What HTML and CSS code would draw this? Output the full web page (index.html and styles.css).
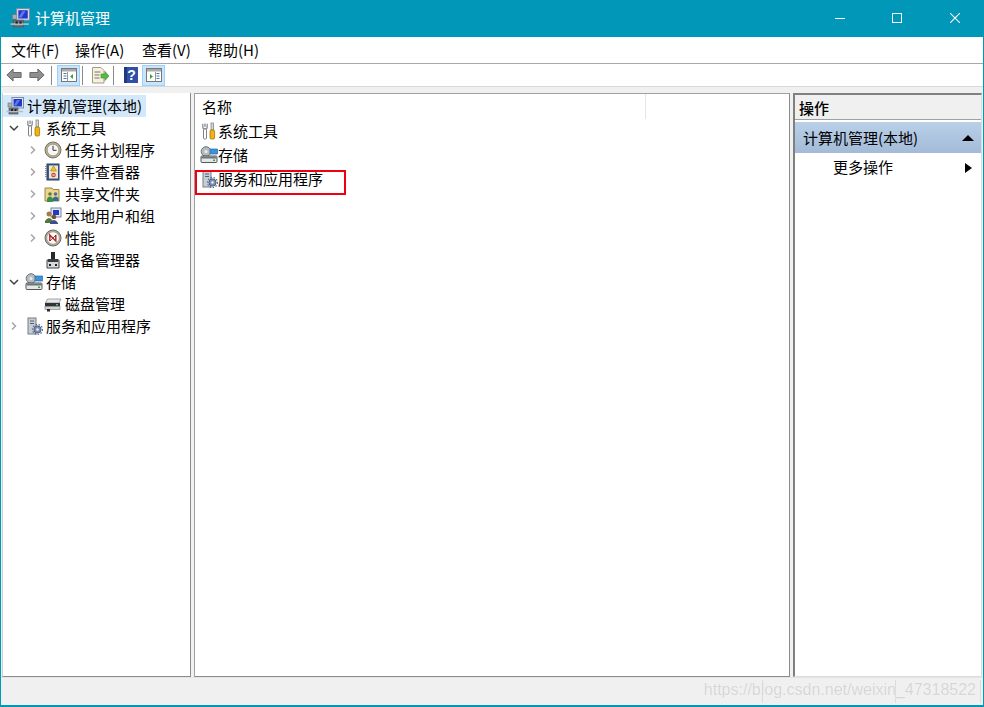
FILE: index.html
```html
<!DOCTYPE html>
<html lang="zh">
<head>
<meta charset="utf-8">
<title>计算机管理</title>
<link rel="stylesheet" href="styles.css">
</head>
<body>
<svg class="defs" width="0" height="0" aria-hidden="true">
  <defs>
    <symbol id="mgmt" viewBox="0 0 18 18">
      <rect x="2" y="6" width="7" height="4" fill="#a9aeb2" stroke="#6d7377" stroke-width=".6"/>
      <rect x="6" y="0.500" width="11.500" height="10.500" fill="#dfe6f2" stroke="#7f8ca5"/>
      <rect x="7.500" y="2" width="8.500" height="7.500" fill="#2338c8"/>
      <path d="M8 8l3-5h3l-4 6Z" fill="#5d79e8"/>
      <rect x="3" y="11" width="9" height="6" fill="#6f7a80" stroke="#4c5256" stroke-width=".7"/>
      <path d="M.5 14.500h16.500" stroke="#b9bec2" stroke-width="1.400"/>
      <rect x="5" y="12" width="2" height="2" fill="#222"/>
      <rect x="8.500" y="12" width="2" height="2" fill="#222"/>
    </symbol>
    <symbol id="tools" viewBox="0 0 18 18">
      <path d="M5 1.500v3.500M2.800 1.800v3.200q0 2 2.200 2t2.200-2V1.800" fill="none" stroke="#8a8f94" stroke-width="1.300"/>
      <rect x="3.500" y="7" width="3" height="10" rx="1" fill="#fff" stroke="#7d8186"/>
      <rect x="11" y="1" width="2.600" height="7" fill="#d6d9dc" stroke="#777" stroke-width=".7"/>
      <rect x="10" y="8" width="4.600" height="9" rx="1.300" fill="#f0b312" stroke="#946a00" stroke-width=".7"/>
    </symbol>
    <symbol id="clock" viewBox="0 0 18 18">
      <circle cx="9" cy="9" r="8" fill="#b7ad8a" stroke="#77746a"/>
      <circle cx="9" cy="9" r="5.800" fill="#f4f6f8" stroke="#94927f" stroke-width=".7"/>
      <path d="M9 4.800V9.300H12.500" fill="none" stroke="#333" stroke-width="1"/>
    </symbol>
    <symbol id="log" viewBox="0 0 18 18">
      <rect x="3" y="1" width="12" height="16" fill="#3b5a8f" stroke="#26406b"/>
      <rect x="5" y="2.500" width="9" height="13" fill="#eee7cf"/>
      <path d="M2 3v12" stroke="#888" stroke-dasharray="1 1" stroke-width="2"/>
      <path d="M9.500 3L12.500 8H6.500Z" fill="#f2c416" stroke="#8a6b00" stroke-width=".5"/>
      <circle cx="9.500" cy="12" r="2.300" fill="#d43a3a"/>
      <path d="M8.500 11l2 2m0-2l-2 2" stroke="#fff" stroke-width=".7"/>
    </symbol>
    <symbol id="share" viewBox="0 0 18 18">
      <path d="M1 3h7l1 1.500h6V16H1Z" fill="#ecd68e" stroke="#9a8647"/>
      <circle cx="6" cy="9" r="1.800" fill="#5d7c3a"/>
      <path d="M3 13.500q3-4 6 0V17H3Z" fill="#3d8c4a"/>
      <circle cx="11.500" cy="9" r="1.800" fill="#566c8c"/>
      <path d="M9 13q2.500-3 5.500 0V16H9Z" fill="#2f6f9f"/>
    </symbol>
    <symbol id="users" viewBox="0 0 18 18">
      <rect x="7" y="1" width="10" height="9" fill="#e0e6ef" stroke="#7b879b"/>
      <rect x="9" y="3" width="6" height="5" fill="#2338c8"/>
      <circle cx="5" cy="7" r="2.500" fill="#a87b45"/>
      <path d="M1 14q4-6 8 0v2H1Z" fill="#51783c"/>
      <circle cx="10" cy="10" r="2.300" fill="#7a5128"/>
      <path d="M6 16q4-6 8 0v1H6Z" fill="#3a4f8c"/>
    </symbol>
    <symbol id="perf" viewBox="0 0 18 18">
      <circle cx="9" cy="9" r="8" fill="#a8a89c" stroke="#6c6c62"/>
      <circle cx="9" cy="9" r="5.800" fill="#fbfbf6"/>
      <path d="M5.800 12V6l6 6V6" fill="none" stroke="#c2272d" stroke-width="1.500"/>
      <path d="M6 12L12 6" stroke="#222" stroke-width=".7"/>
    </symbol>
    <symbol id="device" viewBox="0 0 18 18">
      <rect x="7" y="1" width="4" height="7" fill="#26292b"/>
      <path d="M3 9h12v8H3Z" fill="#d7dadc" stroke="#3e4346"/>
      <rect x="4" y="8" width="10" height="3" fill="#3a3e40"/>
      <rect x="5" y="13" width="2" height="2" fill="#222"/>
      <rect x="11" y="13" width="2" height="2" fill="#222"/>
    </symbol>
    <symbol id="storage" viewBox="0 0 18 18">
      <circle cx="6" cy="5.500" r="4.800" fill="#b5bcc0" stroke="#6c7478"/>
      <circle cx="6" cy="5.500" r="1.500" fill="#e8ecee"/>
      <rect x="10" y="3" width="7.500" height="5" fill="#3d93d8" stroke="#2a6aa6" stroke-width=".7"/>
      <rect x="1" y="10" width="16" height="6.500" rx="1" fill="#e4e7e6" stroke="#50585c"/>
      <rect x="1.500" y="10.500" width="15" height="2" fill="#6c7478"/>
      <rect x="13" y="13.500" width="2" height="1.500" fill="#43a047"/>
    </symbol>
    <symbol id="disk" viewBox="0 0 18 18">
      <path d="M3.500 4H17L15 8H1.500Z" fill="#e6e8e8" stroke="#7b8083" stroke-width=".7"/>
      <rect x="1" y="8" width="15" height="3.500" fill="#2f3336"/>
      <rect x="1" y="11.500" width="15" height="3" fill="#d0d3d4" stroke="#777" stroke-width=".6"/>
      <rect x="12" y="9" width="2" height="1.400" fill="#62c962"/>
      <rect x="3" y="14" width="3" height="2.500" fill="#26292b"/>
    </symbol>
    <symbol id="services" viewBox="0 0 18 18">
      <rect x="3" y="1" width="8" height="16" fill="#c6cdd4" stroke="#767e86"/>
      <path d="M5 4h4M5 6.500h4" stroke="#59626a" stroke-width="1"/>
      <circle cx="12.500" cy="12.500" r="3.600" fill="#7b8fb2" stroke="#4e5f7f"/>
      <circle cx="12.500" cy="12.500" r="5" fill="none" stroke="#5d7298" stroke-width="1.300" stroke-dasharray="1.500 1.500"/>
      <circle cx="12.500" cy="12.500" r="1.200" fill="#eef1f6"/>
    </symbol>
    <symbol id="chev-r" viewBox="0 0 10 10">
      <path d="M3 1.500L6.500 5L3 8.500" fill="none" stroke="#a6a6a6" stroke-width="1.500"/>
    </symbol>
    <symbol id="chev-d" viewBox="0 0 10 10">
      <path d="M1 3L5 7L9 3" fill="none" stroke="#404040" stroke-width="1.500"/>
    </symbol>
  </defs>
</svg>

<div class="window">
  <header class="titlebar">
    <svg class="app-icon"><use href="#mgmt"/></svg>
    <span class="title-text">计算机管理</span>
    <div class="controls">
      <svg class="ctl" viewBox="0 0 10 10"><path d="M0 5.500h10" stroke="#fff"/></svg>
      <svg class="ctl" viewBox="0 0 10 10"><rect x=".5" y=".5" width="9" height="9" fill="none" stroke="#fff"/></svg>
      <svg class="ctl" viewBox="0 0 10 10"><path d="M0 0L10 10M10 0L0 10" stroke="#fff" stroke-width="1.100"/></svg>
    </div>
  </header>

  <nav class="menubar">
    <span>文件(F)</span><span>操作(A)</span><span>查看(V)</span><span>帮助(H)</span>
  </nav>

  <div class="toolbar">
    <svg class="arrow" viewBox="0 0 18 14" preserveAspectRatio="none"><path d="M8 1L1 7l7 6V9.500h9v-5H8Z" fill="#8f8f8f" stroke="#666"/></svg>
    <svg class="arrow last" viewBox="0 0 18 14" preserveAspectRatio="none"><path d="M10 1l7 6-7 6V9.500H1v-5h9Z" fill="#8f8f8f" stroke="#666"/></svg>
    <i class="tsep"></i>
    <span class="tbtn on">
      <svg viewBox="0 0 16 14" class="ticon"><rect x=".5" y=".5" width="15" height="13" fill="#fff" stroke="#777"/><rect x="1" y="1" width="14" height="2.500" fill="#a9a9a9"/><path d="M2.500 5.500h3M2.500 8h3M2.500 10.500h3" stroke="#4a76b8"/><path d="M6.500 4v9.500" stroke="#999"/><path d="M12 6v5L9 8.500Z" fill="#3aa53a"/></svg>
    </span>
    <i class="tsep"></i>
    <span class="tbtn">
      <svg viewBox="0 0 18 17" class="ticon doc"><path d="M1.500.5H10l3 3V16H1.500Z" fill="#f5f1dc" stroke="#a39c82"/><path d="M3.500 5h6M3.500 8h5M3.500 11h5" stroke="#777"/><path d="M10 7l4 0V4.500L18 9l-4 4.500V11h-4Z" fill="#58b948" stroke="#3f8a34" stroke-width=".6"/></svg>
    </span>
    <i class="tsep"></i>
    <span class="tbtn flush">
      <svg viewBox="0 0 14 16" class="ticon help"><rect width="14" height="16" fill="#2f4fa8"/><rect x="0" y="0" width="3" height="16" fill="#22387c"/><text x="7.500" y="13" class="help-q">?</text></svg>
    </span>
    <span class="tbtn on">
      <svg viewBox="0 0 16 14" class="ticon"><rect x=".5" y=".5" width="15" height="13" fill="#fff" stroke="#777"/><rect x="1" y="1" width="14" height="2.500" fill="#a9a9a9"/><path d="M10.500 5.500h3M10.500 8h3M10.500 10.500h3" stroke="#4a76b8"/><path d="M9.500 4v9.500" stroke="#999"/><path d="M4 6v5l3-2.500Z" fill="#3aa53a"/></svg>
    </span>
  </div>

  <main class="panes">
    <section class="pane tree">
      <div class="row root"><svg class="ico"><use href="#mgmt"/></svg><span>计算机管理(本地)</span></div>
      <div class="row l1"><svg class="chev"><use href="#chev-d"/></svg><svg class="ico"><use href="#tools"/></svg><span>系统工具</span></div>
      <div class="row l2"><svg class="chev"><use href="#chev-r"/></svg><svg class="ico"><use href="#clock"/></svg><span>任务计划程序</span></div>
      <div class="row l2"><svg class="chev"><use href="#chev-r"/></svg><svg class="ico"><use href="#log"/></svg><span>事件查看器</span></div>
      <div class="row l2"><svg class="chev"><use href="#chev-r"/></svg><svg class="ico"><use href="#share"/></svg><span>共享文件夹</span></div>
      <div class="row l2"><svg class="chev"><use href="#chev-r"/></svg><svg class="ico"><use href="#users"/></svg><span>本地用户和组</span></div>
      <div class="row l2"><svg class="chev"><use href="#chev-r"/></svg><svg class="ico"><use href="#perf"/></svg><span>性能</span></div>
      <div class="row l2"><i class="chev"></i><svg class="ico"><use href="#device"/></svg><span>设备管理器</span></div>
      <div class="row l1"><svg class="chev"><use href="#chev-d"/></svg><svg class="ico"><use href="#storage"/></svg><span>存储</span></div>
      <div class="row l2"><i class="chev"></i><svg class="ico"><use href="#disk"/></svg><span>磁盘管理</span></div>
      <div class="row l1"><svg class="chev"><use href="#chev-r"/></svg><svg class="ico"><use href="#services"/></svg><span>服务和应用程序</span></div>
    </section>

    <section class="pane list">
      <div class="list-head"><span class="col-name">名称</span></div>
      <div class="item"><svg class="ico"><use href="#tools"/></svg><span>系统工具</span></div>
      <div class="item"><svg class="ico"><use href="#storage"/></svg><span>存储</span></div>
      <div class="item"><svg class="ico"><use href="#services"/></svg><span>服务和应用程序</span><i class="mark"></i></div>
    </section>

    <aside class="pane actions">
      <div class="act-head">操作</div>
      <div class="act-group"><span>计算机管理(本地)</span><i class="tri-up"></i></div>
      <div class="act-item"><span>更多操作</span><i class="tri-right"></i></div>
    </aside>
  </main>

  <footer class="statusbar">
    <i class="sb-line one"></i><i class="sb-line two"></i><i class="sb-line three"></i>
    <span class="watermark">https://blog.csdn.net/weixin_47318522</span>
  </footer>
</div>
</body>
</html>
```

FILE: styles.css
```css
* { box-sizing: border-box; }
html, body { margin: 0; padding: 0; }
body {
  width: 984px;
  height: 707px;
  overflow: hidden;
  font-family: "Noto Sans CJK SC", "Liberation Sans", sans-serif;
  font-size: 15px;
  color: #000;
  background: #f0f0f0;
}
.defs { position: absolute; }
.window {
  width: 984px;
  height: 707px;
  display: flex;
  flex-direction: column;
  border: 1px solid #0097b9;
  border-top: 0;
  border-bottom-width: 2px;
  background: #f0f0f0;
}
.titlebar {
  height: 37px;
  flex: none;
  margin: 0 -1px;
  padding-left: 10px;
  display: flex;
  align-items: center;
  background: #0097b9;
  color: #fff;
}
.app-icon { width: 20px; height: 20px; flex: none; margin-top: -2px; }
.title-text { margin-left: 5px; line-height: 20px; padding-bottom: 2px; }
.controls { margin-left: auto; display: flex; align-items: center; }
.ctl { width: 10px; height: 10px; margin-right: 48px; margin-top: -1px; flex: none; }
.ctl:last-child { margin-right: 24px; }
.ctl:first-child { margin-right: 47px; }
.menubar {
  height: 27px;
  flex: none;
  padding-left: 10px;
  display: grid;
  grid-template-columns: 64px 67px 66px auto;
  align-items: center;
  background: #fff;
  border-bottom: 1px solid #a8a8a8;
}
.menubar span { line-height: 20px; }
.toolbar {
  height: 23px;
  flex: none;
  padding-left: 5px;
  display: flex;
  align-items: center;
  background: #fff;
  border-bottom: 1px solid #d8d8d8;
}
.arrow { width: 16px; height: 14px; flex: none; margin-right: 7px; }
.arrow.last { margin-right: 6px; }
.tsep { width: 1px; height: 19px; background: #8a8a8a; flex: none; margin-right: 5px; }
.tbtn {
  width: 23px;
  height: 21px;
  flex: none;
  margin-right: 2px;
  display: flex;
  align-items: center;
  justify-content: center;
  border: 1px solid transparent;
}
.tbtn.flush { margin-right: 0; }
.tbtn.on { background: #cce4f7; border-color: #99d1ff; }
.ticon { width: 16px; height: 14px; }
.ticon.doc { width: 18px; height: 17px; }
.ticon.help { width: 14px; height: 16px; }
.help-q { font-family: "Liberation Sans", sans-serif; font-size: 14px; font-weight: 700; fill: #fff; text-anchor: middle; }
.panes {
  height: 591px;
  flex: none;
  margin-top: 6px;
  padding: 0 0 0 1px;
  display: flex;
  gap: 3px;
}
.pane {
  background: #fff;
  border: 1px solid #a0a0a0;
  border-right-color: #8c8c8c;
  border-bottom-color: #8c8c8c;
  height: 584px;
  flex: none;
}
.tree { width: 189px; border-top: 0; padding-top: 2px; border-left-color: #d0d0d0; }
.list { width: 596px; }
.actions {
  width: 189px;
  border-top: 2px solid #808080;
  border-left: 2px solid #808080;
  border-bottom: 1px solid #dcdcdc;
  border-right: 1px solid #dcdcdc;
}
.row {
  height: 22px;
  display: flex;
  align-items: center;
  white-space: nowrap;
}
.row span { line-height: 20px; }
.row .ico { margin-right: 3px; }
.ico { width: 18px; height: 18px; flex: none; }
.chev { width: 10px; height: 10px; flex: none; display: block; }
.root { padding-left: 3px; width: 143px; background: #d3e8fa; }
.l1 { padding-left: 6px; }
.l1 .chev { margin-right: 6px; }
.l2 { padding-left: 25px; }
.l2 .chev { margin-right: 6px; }
.list-head {
  height: 25px;
  display: flex;
}
.col-name {
  width: 451px;
  height: 25px;
  line-height: 25px;
  padding-left: 7px;
  border-right: 1px solid #e5e5e5;
}
.item {
  height: 24px;
  padding-left: 5px;
  display: flex;
  align-items: center;
  position: relative;
  white-space: nowrap;
}
.item span { line-height: 20px; }
.mark {
  position: absolute;
  left: 0;
  top: 3px;
  width: 151px;
  height: 25px;
  border: 2px solid #ee0010;
}
.act-head {
  height: 25px;
  padding-left: 4px;
  line-height: 26px;
  font-weight: 500;
  background: #f0f0f0;
  border-bottom: 1px solid #a0a0a0;
}
.act-group {
  height: 31px;
  padding: 0 8px 0 8px;
  display: flex;
  align-items: center;
  justify-content: space-between;
  background: linear-gradient(#b9d0e8, #a3bbd8);
  margin-top: 2px;
}
.tri-up { width: 0; height: 0; border: 6px solid transparent; border-top: 0; border-bottom: 6px solid #000; margin-right: -1px; }
.act-item {
  height: 30px;
  padding: 0 9px 0 38px;
  display: flex;
  align-items: center;
  justify-content: space-between;
}
.act-item span { padding-bottom: 2px; line-height: 20px; }
.tri-right { width: 0; height: 0; border: 5.500px solid transparent; border-right: 0; border-left: 7px solid #000; }
.statusbar {
  flex: 1;
  position: relative;
  background: #f0f0f0;
  margin-top: -7px;
  border-top: 1px solid #e4e4e4;
}
.sb-line { position: absolute; top: 2px; bottom: 2px; width: 1px; background: #dcdcdc; }
.sb-line.one { left: 761px; }
.sb-line.two { left: 894px; }
.sb-line.three { left: 979px; }
.watermark {
  position: absolute;
  right: 7px;
  top: 1px;
  font-family: "Liberation Sans", sans-serif;
  font-size: 16px;
  line-height: 22px;
  color: #d6d6d6;
  text-shadow: 0 0 1px #fff;
  white-space: nowrap;
}
```
